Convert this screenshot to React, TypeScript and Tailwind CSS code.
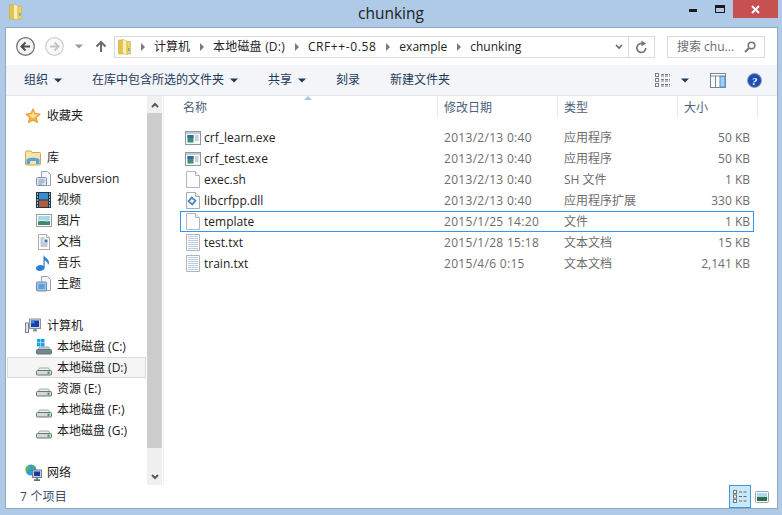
import React from "react";

const FONT = "font-['Open_Sans','Noto_Sans_CJK_SC',sans-serif]";

const Folder = () => (
  <svg width="13" height="16" viewBox="0 0 13 16" className="shrink-0">
    <path d="M.5 1h5v14h-5z" fill="#e6c34f" stroke="#c9a63c" strokeWidth=".6" />
    <path d="M4.500.3l4.500 1.500v14l-4.500-1z" fill="#fbf0ae" stroke="#d6b94f" strokeWidth=".6" />
    <path d="M9 2.500h3.500v12.500H9z" fill="#efd265" stroke="#cfb04a" strokeWidth=".6" />
    <rect x="10.300" y="9" width="1.200" height="3" fill="#5d9bd0" />
  </svg>
);

const Star = () => (
  <svg width="16" height="16" viewBox="0 0 16 16" className="shrink-0">
    <path d="M8 .8l2.200 4.700 5.100.6-3.800 3.500 1 5.100L8 12.200l-4.500 2.500 1-5.100L.7 6.100l5.100-.6z" fill="#f9b43c" stroke="#d98a25" strokeWidth=".8" />
    <path d="M8 3l1.400 3.400 3.400.3L8 10.500 3.700 6.700l3.300-.4z" fill="#fde39a" />
  </svg>
);

const LibIcon = () => (
  <svg width="16" height="16" viewBox="0 0 16 16" className="shrink-0">
    <path d="M.5 3.500V14a1 1 0 001 1h13a1 1 0 001-1V3.500a1 1 0 00-1-1H7L6 1H1.500a1 1 0 00-1 1z" fill="#f6e5aa" stroke="#c9a95a" />
    <path d="M1.500 14V9.500C3 7 13 7 14.500 9.500V14h-3.500v-3H5v3z" fill="#5aa3d8" />
  </svg>
);

const DocBase = ({ children, fill = "#fff" }: { children?: React.ReactNode; fill?: string }) => (
  <svg width="16" height="16" viewBox="0 0 16 16" className="shrink-0">
    <path d="M2.500.5h8l3 3v12h-11z" fill={fill} stroke="#a9adb3" />
    <path d="M10.500.5v3h3" fill="#eef0f2" stroke="#a9adb3" />
    {children}
  </svg>
);

const Subversion = () => (
  <svg width="16" height="16" viewBox="0 0 16 16" className="shrink-0">
    <path d="M5.500.5h6l3 3v11h-9z" fill="#f4f6f9" stroke="#9aa3ad" />
    <rect x=".5" y="6.500" width="10" height="8" rx="1" fill="#dce6f1" stroke="#7e94ab" />
    <path d="M2.500 9h6M2.500 11h6M2.500 13h4" stroke="#7e94ab" />
  </svg>
);

const Video = () => (
  <svg width="15" height="16" viewBox="0 0 15 16" className="shrink-0">
    <rect width="15" height="16" fill="#1d3a4c" />
    <rect x="3" y="1" width="9" height="6.500" fill="#3b8ccc" />
    <rect x="3" y="8.500" width="9" height="6.500" fill="#b25a3e" />
    <path d="M1 2h1M1 5h1M1 8h1M1 11h1M1 14h1M13 2h1M13 5h1M13 8h1M13 11h1M13 14h1" stroke="#d5e3ec" strokeWidth="1.400" />
  </svg>
);

const Picture = () => (
  <svg width="16" height="13" viewBox="0 0 16 13" className="shrink-0">
    <rect x=".5" y=".5" width="15" height="12" fill="#fff" stroke="#9c9fa3" />
    <rect x="2" y="2" width="12" height="4.500" fill="#a8d8ec" />
    <rect x="2" y="6.500" width="12" height="4.500" fill="#3f8a6f" />
    <path d="M2 7c4-2 8 1 12-.500" stroke="#e9f5f3" fill="none" />
  </svg>
);

const DocLib = () => (
  <DocBase>
    <path d="M4.500 4h4M4.500 6h3M4.500 8h3M4.500 10h7M4.500 12h7" stroke="#8b95a5" />
    <rect x="8.500" y="5.500" width="3" height="3" fill="#3a76b6" />
  </DocBase>
);

const Music = () => (
  <svg width="14" height="17" viewBox="0 0 14 17" className="shrink-0">
    <path d="M7.500.5c.3 3 5.500 4 5.500 8 0 1-.5 2-1 2.500.2-2.500-2-4-3.300-4.500v7C8.700 15.500 6.500 17 3.500 17 1.500 17 0 16 0 14.500 0 12.500 2.500 11 4.500 11c.8 0 1.800.2 3 .7z" fill="#2d7fd0" />
  </svg>
);

const Theme = () => (
  <svg width="16" height="16" viewBox="0 0 16 16" className="shrink-0">
    <path d="M5.500.5h6l3 3v11h-9z" fill="#f4f6f9" stroke="#9aa3ad" />
    <rect x=".5" y="6" width="10" height="9" rx="1" fill="#9cc5ea" stroke="#6e8fae" />
    <rect x="2.500" y="8" width="6" height="5" fill="#5b9edb" />
  </svg>
);

const Computer = () => (
  <svg width="16" height="16" viewBox="0 0 16 16" className="shrink-0">
    <rect x=".5" y="5" width="3" height="9.500" fill="#dfe3e6" stroke="#7d8790" />
    <rect x="4.500" y="1" width="11" height="9.500" fill="#d5d9de" stroke="#8a929a" />
    <rect x="6" y="2.500" width="8" height="6.500" fill="#123fa9" />
    <rect x="6" y="2.500" width="3.500" height="3" fill="#3f84de" />
    <path d="M8.500 11h3l.8 2.500h-4.600z" fill="#8a929a" />
  </svg>
);

const Drive = ({ win = false }: { win?: boolean }) => (
  <svg width="16" height="16" viewBox="0 0 16 16" className="shrink-0">
    {win && (
      <g fill="#1ba1e6">
        <rect x="1" y="0" width="3.500" height="3.500" />
        <rect x="5" y="0" width="3.500" height="3.500" />
        <rect x="1" y="4" width="3.500" height="3.500" />
        <rect x="5" y="4" width="3.500" height="3.500" />
      </g>
    )}
    <path d="M2 10.500L3.500 8h9l1.500 2.500z" fill={win ? "#c6ced3" : "#eceef0"} stroke="#8f969c" strokeWidth=".8" />
    <rect x=".5" y="10.500" width="15" height="4.500" rx="1" fill={win ? "#6f8a96" : "#d4d8db"} stroke="#6c7378" />
    <rect x="11.500" y="11.500" width="2" height="2.500" fill="#3fae49" />
  </svg>
);

const Network = () => (
  <svg width="17" height="17" viewBox="0 0 17 17" className="shrink-0">
    <circle cx="6" cy="6" r="5.500" fill="#2f9bd8" />
    <path d="M3 2c2 0 3 1 2.500 2.500S3 5 2.500 7 4 10 5 10.500 2 10 1 7 1.500 2.500 3 2zM7 1c2 .5 3 1 3.500 2.500L8 4.500z" fill="#57b947" />
    <rect x="7.500" y="6" width="9" height="7.500" fill="#c6ccd3" stroke="#75808a" />
    <rect x="9" y="7.500" width="6" height="4.500" fill="#143da5" />
    <rect x="11" y="13.500" width="2" height="2" fill="#75808a" />
    <rect x="9" y="15.500" width="6" height="1.200" fill="#26303a" />
  </svg>
);

const Exe = () => (
  <svg width="16" height="14" viewBox="0 0 16 14" className="shrink-0">
    <rect x=".5" y=".5" width="15" height="13" fill="#f7f8f9" stroke="#8f989f" />
    <rect x="1" y="1" width="14" height="2" fill="#c5ccd2" />
    <rect x="2.500" y="4" width="6" height="7.500" fill="#3d8f7c" />
    <rect x="2.500" y="4" width="6" height="3" fill="#2f6fa8" />
    <path d="M10 5h3.500M10 7h3.500M10 9h3.500" stroke="#a0a8af" />
  </svg>
);

const PlainFile = () => (
  <svg width="14" height="17" viewBox="0 0 14 17" className="shrink-0">
    <path d="M.5.500h9l4 4v12H.5z" fill="#fdfdfd" stroke="#b3b6ba" />
    <path d="M9.500.500v4h4" fill="#f0f0f0" stroke="#b3b6ba" />
  </svg>
);

const Dll = () => (
  <svg width="14" height="17" viewBox="0 0 14 17" className="shrink-0">
    <path d="M.5.500h9l4 4v12H.5z" fill="#fdfdfd" stroke="#a9adb1" />
    <path d="M9.500.500v4h4" fill="#f0f0f0" stroke="#a9adb1" />
    <g transform="rotate(40 6 9)">
      <rect x="3" y="6" width="6" height="6" fill="#4a90cf" stroke="#2a629f" strokeWidth=".6" />
      <rect x="4.500" y="7.500" width="3" height="3" fill="#fff" />
    </g>
  </svg>
);

const TextFile = () => (
  <svg width="14" height="17" viewBox="0 0 14 17" className="shrink-0">
    <path d="M.5.500h13v16H.5z" fill="#fdfdfd" stroke="#b0b4b8" />
    <path d="M2 2.500h10M2 4.500h10M2 6.500h10M2 8.500h10M2 10.500h10M2 12.500h10M2 14.500h10" stroke="#b9cee2" />
  </svg>
);

const Head = ({ icon, label }: { icon: React.ReactNode; label: string }) => (
  <div className="flex h-[21px] items-center pl-[19px]">
    <div className="flex w-[22px] justify-start">{icon}</div>
    <span>{label}</span>
  </div>
);

const Sub = ({ icon, label, sel = false }: { icon: React.ReactNode; label: string; sel?: boolean }) => (
  <div className={`ml-px flex h-[21px] w-[139px] items-center ${sel ? "border border-[#dadada] bg-[#f5f5f5] pl-[28px]" : "pl-[29px]"}`}>
    <div className="flex w-[21px] justify-start">{icon}</div>
    <span className="whitespace-pre">{label}</span>
  </div>
);

const rows = [
  { icon: <Exe />, name: "crf_learn.exe", date: "2013/2/13 0:40", type: "应用程序", size: "50 KB" },
  { icon: <Exe />, name: "crf_test.exe", date: "2013/2/13 0:40", type: "应用程序", size: "50 KB" },
  { icon: <PlainFile />, name: "exec.sh", date: "2013/2/13 0:40", type: "SH 文件", size: "1 KB" },
  { icon: <Dll />, name: "libcrfpp.dll", date: "2013/2/13 0:40", type: "应用程序扩展", size: "330 KB" },
  { icon: <PlainFile />, name: "template", date: "2015/1/25 14:20", type: "文件", size: "1 KB", sel: true },
  { icon: <TextFile />, name: "test.txt", date: "2015/1/28 15:18", type: "文本文档", size: "15 KB" },
  { icon: <TextFile />, name: "train.txt", date: "2015/4/6 0:15", type: "文本文档", size: "2,141 KB" },
];

const Chevron = () => (
  <svg width="6" height="8" viewBox="0 0 6 8" className="shrink-0">
    <path d="M1 0l4 4-4 4z" fill="#7a7a7a" />
  </svg>
);

const Caret = ({ color = "#1e395b" }: { color?: string }) => (
  <svg width="8" height="5" viewBox="0 0 8 5" className="shrink-0">
    <path d="M0 .5h8L4 4.500z" fill={color} />
  </svg>
);

const Crumb = ({ t, cls = "" }: { t: string; cls?: string }) => (
  <span className="flex items-center gap-[8px] whitespace-pre">
    <Chevron />
    <span className={cls}>{t}</span>
  </span>
);

const ToolBtn = ({ t, caret = true, w }: { t: string; caret?: boolean; w: string }) => (
  <div className={`flex items-center gap-[6px] ${w}`}>
    <span>{t}</span>
    {caret && <Caret />}
  </div>
);

const ColHead = ({ t, w }: { t: string; w: string }) => (
  <div className={`flex h-[22px] items-center border-r border-[#e3e8ee] pt-[2px] ${w}`}>{t}</div>
);

export default function App() {
  return (
    <div className={`flex h-[515px] w-[782px] flex-col overflow-hidden bg-[#aecae7] text-[12px] text-[#1a1a1a] ${FONT}`}>
      <div className="flex h-[27px] shrink-0 items-start">
        <div className="w-[358px] pl-[9px] pt-[4px]">
          <Folder />
        </div>
        <div className="flex-1 pt-[1px] text-[15.5px] leading-[24px] text-[#222]">chunking</div>
        <div className="mr-[4px] flex items-center">
          <div className="flex h-[18px] w-[27px] items-center justify-center">
            <div className="mt-[3px] h-[3px] w-[8px] bg-[#1a1a1a]" />
          </div>
          <div className="flex h-[18px] w-[27px] items-center justify-center">
            <div className="h-[8px] w-[10px] border-[1.5px] border-t-[3px] border-[#1a1a1a]" />
          </div>
          <div className="flex h-[18px] w-[45px] items-center justify-center bg-[#c75050]">
            <svg width="9" height="9" viewBox="0 0 9 9">
              <path d="M1 1l7 7M8 1L1 8" stroke="#fff" strokeWidth="2" />
            </svg>
          </div>
        </div>
      </div>

      <div className="mb-[6px] ml-[5px] mr-[4px] flex flex-1 flex-col border border-[#8fa9c8] bg-white">
        <div className="flex h-[37px] shrink-0 items-center pl-[10px]">
          <svg width="19" height="19" viewBox="0 0 19 19" className="shrink-0">
            <circle cx="9.500" cy="9.500" r="8.800" fill="#f5f5f5" stroke="#6d6d6d" strokeWidth="1.200" />
            <path d="M14 9.500H6M9.500 5.500l-4 4 4 4" stroke="#4d4d4d" strokeWidth="2" fill="none" />
          </svg>
          <svg width="19" height="19" viewBox="0 0 19 19" className="ml-[10px] shrink-0">
            <circle cx="9.500" cy="9.500" r="8.800" fill="#fafafa" stroke="#cfcfcf" strokeWidth="1.200" />
            <path d="M5 9.500h8M9.500 5.500l4 4-4 4" stroke="#c4c4c4" strokeWidth="2" fill="none" />
          </svg>
          <div className="ml-[11px]">
            <Caret color="#9a9a9a" />
          </div>
          <svg width="12" height="13" viewBox="0 0 12 13" className="ml-[12px] shrink-0">
            <path d="M6 12V2M1.500 6.500L6 2l4.500 4.500" stroke="#6b6b6b" strokeWidth="2" fill="none" />
          </svg>
          <div className="ml-[7px] flex h-[22px] w-[541px] items-center border border-[#d9d9d9] pl-[3px] text-[#222]">
            <Folder />
            <div className="ml-[9px] flex items-center gap-[9px]">
              <Crumb t="计算机" />
              <Crumb t="本地磁盘 (D:)" cls="tracking-[0.2px]" />
              <Crumb t="CRF++-0.58" cls="tracking-[0.6px]" />
              <Crumb t="example" />
              <Crumb t="chunking" />
            </div>
            <div className="ml-auto flex h-full items-center">
              <svg width="8" height="6" viewBox="0 0 8 6" className="mr-[5px]">
                <path d="M1 1l3 3 3-3" stroke="#666" strokeWidth="1.600" fill="none" />
              </svg>
              <div className="flex h-full w-[26px] items-center justify-center border-l border-[#d9d9d9]">
                <svg width="13" height="14" viewBox="0 0 13 14">
                  <path d="M7.800 3.700A4.500 4.500 0 1 0 10.800 8" stroke="#777" strokeWidth="1.700" fill="none" />
                  <path d="M6.500 0.500L11 3.500 6.500 6.500z" fill="#777" />
                </svg>
              </div>
            </div>
          </div>
          <div className="ml-[12px] flex h-[22px] w-[98px] items-center justify-between border border-[#d9d9d9] pl-[9px] pr-[8px] text-[#6d6d6d]">
            <span>搜索 chu...</span>
            <svg width="12" height="12" viewBox="0 0 12 12">
              <circle cx="7.500" cy="4.500" r="3.300" fill="none" stroke="#777" strokeWidth="1.600" />
              <path d="M5 7l-4 4" stroke="#777" strokeWidth="2" />
            </svg>
          </div>
        </div>

        <div className="flex h-[31px] shrink-0 items-center border-b border-[#e5e9ee] bg-[#f3f5f8] pl-[18px] text-[#1e395b]">
          <ToolBtn t="组织" w="w-[68px]" />
          <ToolBtn t="在库中包含所选的文件夹" w="w-[176px]" />
          <ToolBtn t="共享" w="w-[68px]" />
          <ToolBtn t="刻录" caret={false} w="w-[54px]" />
          <ToolBtn t="新建文件夹" caret={false} w="w-[265px]" />
          <svg width="16" height="14" viewBox="0 0 16 14" className="shrink-0">
            <g fill="#fff" stroke="#75808a">
              <rect x=".5" y=".5" width="3" height="3" />
              <rect x=".5" y="5.500" width="3" height="3" />
              <rect x=".5" y="10.500" width="3" height="3" />
            </g>
            <path d="M6 1.500h9M6 3h9M6 6.500h9M6 8h9M6 11.500h9M6 13h9" stroke="#75808a" strokeDasharray="3 1" />
          </svg>
          <div className="ml-[10px]">
            <Caret />
          </div>
          <svg width="16" height="15" viewBox="0 0 16 15" className="ml-[21px] shrink-0">
            <rect x=".5" y=".5" width="15" height="14" fill="#fff" stroke="#7d8790" />
            <path d="M.5 3h15M5.500 3v11.500" stroke="#7d8790" />
            <rect x="10" y="3.500" width="5" height="10.500" fill="#a7cdf1" stroke="#4b93dd" />
          </svg>
          <svg width="15" height="15" viewBox="0 0 15 15" className="ml-[21px] shrink-0">
            <circle cx="7.500" cy="7.500" r="7" fill="#1d4fb8" stroke="#9aa0a8" />
            <text x="7.500" y="11.500" textAnchor="middle" fontSize="11" fontWeight="700" fontStyle="italic" fill="#fff" fontFamily="Liberation Serif">?</text>
          </svg>
        </div>

        <div className="flex min-h-0 flex-1">
          <div className="flex w-[141px] shrink-0 flex-col pt-[9px] leading-none">
            <Head icon={<Star />} label="收藏夹" />
            <div className="h-[21px]" />
            <Head icon={<LibIcon />} label="库" />
            <Sub icon={<Subversion />} label="Subversion" />
            <Sub icon={<Video />} label="视频" />
            <Sub icon={<Picture />} label="图片" />
            <Sub icon={<DocLib />} label="文档" />
            <Sub icon={<Music />} label="音乐" />
            <Sub icon={<Theme />} label="主题" />
            <div className="h-[21px]" />
            <Head icon={<Computer />} label="计算机" />
            <Sub icon={<Drive win />} label="本地磁盘 (C:)" />
            <Sub icon={<Drive />} label="本地磁盘 (D:)" sel />
            <Sub icon={<Drive />} label="资源 (E:)" />
            <Sub icon={<Drive />} label="本地磁盘 (F:)" />
            <Sub icon={<Drive />} label="本地磁盘 (G:)" />
            <div className="h-[21px]" />
            <Head icon={<Network />} label="网络" />
          </div>

          <div className="flex w-[15px] shrink-0 flex-col bg-[#f0f0f0]">
            <div className="flex h-[17px] items-center justify-center">
              <svg width="8" height="6" viewBox="0 0 8 6">
                <path d="M1 5l3-3 3 3" stroke="#5a5a5a" strokeWidth="2" fill="none" />
              </svg>
            </div>
            <div className="h-[335px] bg-[#cdcdcd]" />
            <div className="flex flex-1 items-center justify-center pt-[20px]">
              <svg width="8" height="6" viewBox="0 0 8 6">
                <path d="M1 1l3 3 3-3" stroke="#5a5a5a" strokeWidth="2" fill="none" />
              </svg>
            </div>
          </div>

          <div className="relative ml-px min-w-0 flex-1 border-l border-[#f0f0f0]">
            <svg width="8" height="4" viewBox="0 0 8 4" className="absolute left-[140px] top-0">
              <path d="M0 4l4-4 4 4z" fill="#a9c6e0" />
            </svg>
            <div className="flex h-[25px] text-[#4c607a]">
              <ColHead t="名称" w="w-[274px] pl-[19px]" />
              <ColHead t="修改日期" w="w-[120px] pl-[6px]" />
              <ColHead t="类型" w="w-[120px] pl-[6px]" />
              <ColHead t="大小" w="w-[80px] pl-[6px]" />
            </div>
            <div className="mt-[6px] flex flex-col">
              {rows.map((r) => (
                <div
                  key={r.name}
                  className={`ml-[16px] flex h-[21px] w-[574px] items-center border ${r.sel ? "border-[#2f97f5]" : "border-transparent"}`}
                >
                  <div className="flex w-[22px] shrink-0 justify-center pl-px">{r.icon}</div>
                  <div className="w-[241px] shrink-0 pl-px text-[#222]">{r.name}</div>
                  <div className="w-[120px] shrink-0 tracking-[0.3px] text-[#6d6d6d]">{r.date}</div>
                  <div className="w-[120px] shrink-0 text-[#6d6d6d]">{r.type}</div>
                  <div className="w-[66px] shrink-0 text-right text-[#6d6d6d]">{r.size}</div>
                </div>
              ))}
            </div>
          </div>
        </div>

        <div className="flex h-[23px] shrink-0 items-center pl-[14px] text-[#3c4e66]">
          <span className="tracking-[0.2px]">7 个项目</span>
          <div className="ml-auto flex items-center">
            <div className="flex h-[23px] w-[22px] items-center justify-center border border-[#3a9bdc] bg-[#cbe8f6]">
              <svg width="15" height="14" viewBox="0 0 15 14">
                <g fill="#fff" stroke="#6d7680">
                  <rect x=".5" y=".5" width="3" height="3" />
                  <rect x=".5" y="5" width="3" height="3" />
                  <rect x=".5" y="9.500" width="3" height="3" />
                </g>
                <path d="M6 2h3M10.500 2h3M6 6.500h3M10.500 6.500h3M6 11h3M10.500 11h3" stroke="#5f6b78" />
              </svg>
            </div>
            <div className="ml-[4px] mr-[8px] flex h-[22px] w-[14px] items-center justify-center">
              <svg width="14" height="12" viewBox="0 0 14 12">
                <rect x=".5" y=".5" width="13" height="11" rx="1" fill="#fff" stroke="#98a2ad" />
                <rect x="2" y="2" width="10" height="4" fill="#a7dcf2" />
                <rect x="2" y="6" width="10" height="4" fill="#2e6d50" />
              </svg>
            </div>
          </div>
        </div>
      </div>
    </div>
  );
}
